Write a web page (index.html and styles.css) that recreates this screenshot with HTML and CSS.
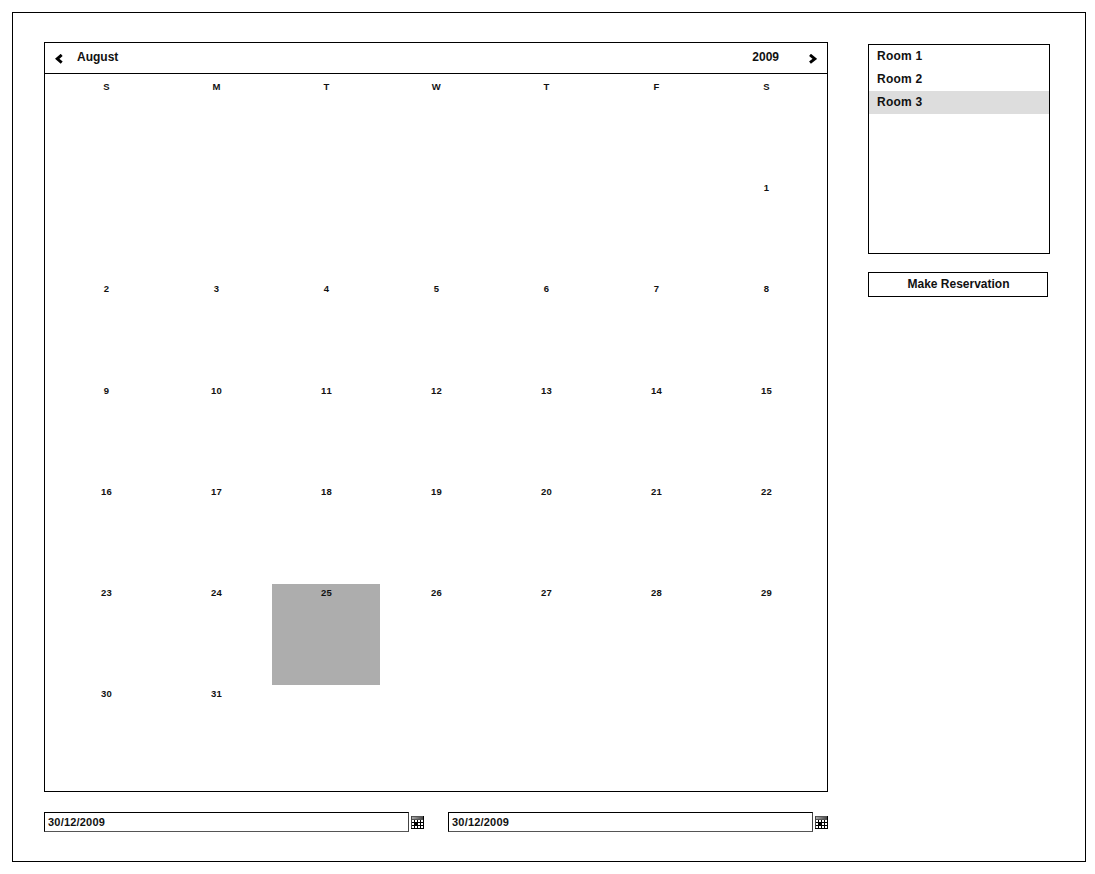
FILE: index.html
```html
<!DOCTYPE html>
<html lang="en">
<head>
<meta charset="utf-8">
<title>Room reservation</title>
<link rel="stylesheet" href="styles.css">
</head>
<body>
<svg class="defs" width="0" height="0" aria-hidden="true">
  <defs>
    <linearGradient id="cap" x1="0" y1="0" x2="1" y2="0">
      <stop offset="0" stop-color="#aaa"/><stop offset="1" stop-color="#444"/>
    </linearGradient>
    <symbol id="calendar-icon" viewBox="0 0 13 13">
      <path fill="#000" d="M0 0h13v13H0z"/>
      <path fill="#555" d="M0 0h12v4H0z"/>
      <path fill="#444" d="M0 0h1v12H0z"/>
      <path fill="url(#cap)" d="M1 1h11v2H1z"/>
      <path fill="#fff" d="M1 4h2v2H1zM4 4h2v2H4zM7 4h2v2H7zM10 4h2v2h-2zM1 7h2v2H1zM7 7h2v2H7zM10 7h2v2h-2zM1 10h2v2H1zM4 10h2v2H4zM7 10h2v2H7zM10 10h2v2h-2z"/>
    </symbol>
  </defs>
</svg>
<main class="frame">
  <section class="booking">
    <div class="calendar">
      <header class="calendar-head">
        <svg class="arrow" width="8" height="10" viewBox="0 0 8 10"><path d="M6.7 .9L2.2 4.8l4.5 3.9"/></svg>
        <span class="month">August</span>
        <span class="year">2009</span>
        <svg class="arrow" width="8" height="10" viewBox="0 0 8 10"><path d="M1 .9L5.8 4.8L1 8.7"/></svg>
      </header>
      <div class="days">
        <span>S</span><span>M</span><span>T</span><span>W</span><span>T</span><span>F</span><span>S</span>
        <span class="first">1</span>
        <span>2</span><span>3</span><span>4</span><span>5</span><span>6</span><span>7</span><span>8</span>
        <span>9</span><span>10</span><span>11</span><span>12</span><span>13</span><span>14</span><span>15</span>
        <span>16</span><span>17</span><span>18</span><span>19</span><span>20</span><span>21</span><span>22</span>
        <span>23</span><span>24</span><span class="selected">25</span><span>26</span><span>27</span><span>28</span><span>29</span>
        <span>30</span><span>31</span>
      </div>
    </div>
    <div class="dates">
      <div class="date"><div class="field">30/12/2009</div><svg width="13" height="13"><use href="#calendar-icon"/></svg></div>
      <div class="date"><div class="field">30/12/2009</div><svg width="13" height="13"><use href="#calendar-icon"/></svg></div>
    </div>
  </section>
  <aside class="side">
    <ul class="rooms">
      <li>Room 1</li>
      <li>Room 2</li>
      <li class="active">Room 3</li>
    </ul>
    <button class="reserve" type="button">Make Reservation</button>
  </aside>
</main>
</body>
</html>
```
FILE: styles.css
```css
* { box-sizing: border-box; }
body {
  margin: 0;
  background: #fff;
  color: #111;
  font: bold 12px/14px "Liberation Sans", Arial, sans-serif;
}
svg { display: block; flex: none; }
.defs { position: absolute; }
.frame {
  width: 1074px;
  height: 850px;
  margin: 12px;
  padding: 29px 0 0 31px;
  border: 1px solid #000;
  display: flex;
  gap: 40px;
}
.booking { width: 784px; }
.calendar { height: 750px; border: 1px solid #000; }
.calendar-head {
  height: 31px;
  padding: 0 10px 2px;
  border-bottom: 1px solid #000;
  display: flex;
  align-items: center;
}
.arrow {
  margin-top: 3px;
  fill: none;
  stroke: #000;
  stroke-width: 2.9;
}
.month { margin-left: 14px; }
.year { margin: 0 30px 0 auto; }
.days {
  padding: 3px 0 0 7px;
  display: grid;
  grid-template-columns: repeat(7, 108px);
  grid-auto-rows: 101.25px;
  column-gap: 2px;
  text-align: center;
  font-size: 9.5px;
  line-height: 12px;
  letter-spacing: 0.3px;
  font-kerning: none;
}
.days span { padding: 3.9px 0 0 1px; }
.days .first { grid-column: 7; }
.days .selected {
  margin-top: 0.75px;
  padding-top: 3.15px;
  background: #adadad;
}
.dates { margin-top: 20px; display: flex; gap: 24px; }
.date { display: flex; align-items: center; gap: 2px; }
.date svg { margin-top: 1px; }
.field {
  width: 365px;
  height: 20px;
  padding: 3px;
  border: 1px solid #000;
  border-right-color: #444;
  border-bottom-color: #555;
  font-size: 11px;
  line-height: 13px;
  letter-spacing: 0.2px;
}
.side { padding-top: 2px; }
.rooms {
  width: 182px;
  height: 210px;
  margin: 0 0 18px;
  padding: 0;
  border: 1px solid #000;
  list-style: none;
}
.rooms li { height: 23px; padding: 4px 8px; letter-spacing: 0.25px; }
.rooms .active { background: #ddd; }
.reserve {
  display: block;
  width: 180px;
  height: 25px;
  padding: 0 0 1px 1px;
  border: 1px solid #000;
  background: #fff;
  color: inherit;
  font: inherit;
}
```
